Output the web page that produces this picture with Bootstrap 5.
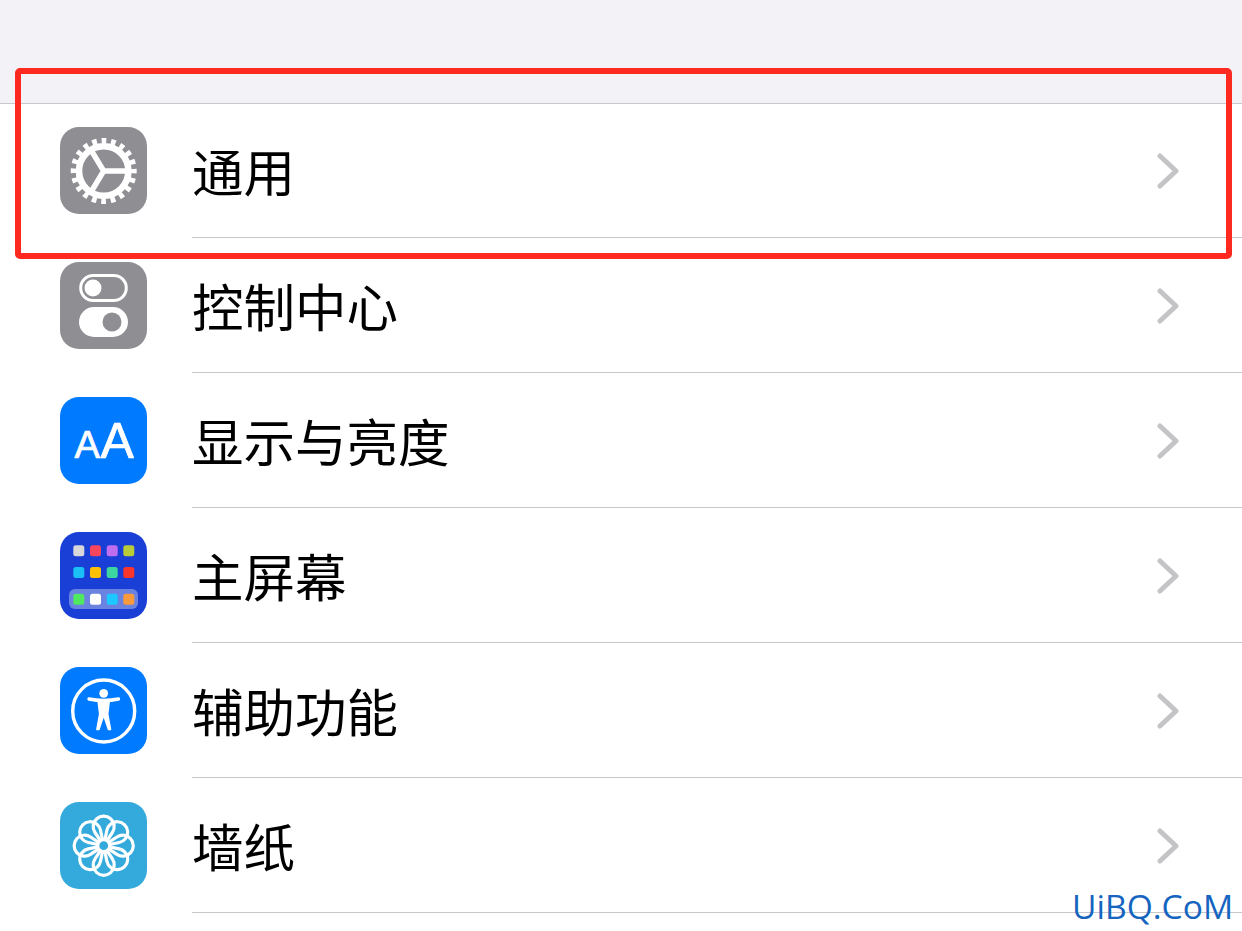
<!DOCTYPE html>
<html lang="zh-CN">
<head>
    <meta charset="UTF-8">
    <meta name="viewport" content="width=device-width, initial-scale=1.0">
    <title>设置</title>
    <link href="https://cdn.jsdelivr.net/npm/bootstrap@5.3.0/dist/css/bootstrap.min.css" rel="stylesheet">
    <style>
        body { background: #fff; overflow: hidden; height: 931px; position: relative; font-family: "Noto Sans CJK SC", "Liberation Sans", sans-serif; }
        .top-gap { height: 104px; background: #f2f2f7; border-bottom: 1px solid #c8c8cc; }
        .settings-list { --bs-list-group-border-width: 0; --bs-list-group-bg: #fff; --bs-list-group-border-radius: 0; }
        .settings-row { height: 135px; }
        .icon-cell { width: 192px; padding: 23px 0 0 60px; flex: none; }
        .app-icon { width: 87px; height: 87px; display: block; }
        .row-body { height: 134px; border-bottom: 1px solid #c8c8cc; }
        .row-label { font-size: 51.5px; line-height: 1; color: #000; padding-bottom: 1px; }
        .row-arrow { width: 22px; height: 36px; margin-right: 63px; }
        .red-frame { position: absolute; left: 15px; top: 68px; width: 1217px; height: 191px; border: 6px solid #ff2a1f; border-radius: 5px; }
        .site-mark { position: absolute; left: 1072px; top: 884px; font-family: "Open Sans", "Liberation Sans", sans-serif; font-size: 33.6px; line-height: 44px; color: #1565c0; }
    </style>
</head>
<body>
    <div class="top-gap"></div>

    <div class="list-group list-group-flush settings-list">
        <div class="list-group-item p-0 d-flex settings-row">
            <div class="icon-cell">
                <svg class="app-icon" viewBox="0 0 87 87">
                    <rect width="87" height="87" rx="19" fill="#8e8e93"/>
                    <circle cx="43.7" cy="44" r="29.5" fill="none" stroke="#fff" stroke-width="7" stroke-dasharray="4.6 4.67" stroke-dashoffset="2.3"/>
                    <circle cx="43.7" cy="44" r="24.7" fill="none" stroke="#fff" stroke-width="6.6"/>
                    <path d="M43.7 44H68M43.7 44L31 23M43.7 44L31 65" fill="none" stroke="#fff" stroke-width="5.4"/>
                </svg>
            </div>
            <div class="row-body flex-grow-1 d-flex align-items-center justify-content-between">
                <span class="row-label">通用</span>
                <svg class="row-arrow" viewBox="0 0 22 36"><path d="M3 3L19 18L3 33" fill="none" stroke="#c4c4c7" stroke-width="5" stroke-linecap="round" stroke-linejoin="round"/></svg>
            </div>
        </div>
        <div class="list-group-item p-0 d-flex settings-row">
            <div class="icon-cell">
                <svg class="app-icon" viewBox="0 0 87 87">
                    <rect width="87" height="87" rx="19" fill="#8e8e93"/>
                    <rect x="20.7" y="13.5" width="45.6" height="25" rx="12.5" fill="none" stroke="#fff" stroke-width="3"/>
                    <circle cx="33" cy="26" r="8.5" fill="#fff"/>
                    <rect x="19" y="45" width="49" height="30" rx="15" fill="#fff"/>
                    <circle cx="52" cy="60" r="9.5" fill="#8e8e93"/>
                </svg>
            </div>
            <div class="row-body flex-grow-1 d-flex align-items-center justify-content-between">
                <span class="row-label">控制中心</span>
                <svg class="row-arrow" viewBox="0 0 22 36"><path d="M3 3L19 18L3 33" fill="none" stroke="#c4c4c7" stroke-width="5" stroke-linecap="round" stroke-linejoin="round"/></svg>
            </div>
        </div>
        <div class="list-group-item p-0 d-flex settings-row">
            <div class="icon-cell">
                <svg class="app-icon" viewBox="0 0 87 87">
                    <rect width="87" height="87" rx="19" fill="#007aff"/>
                    <text x="14.5" y="60.5" font-family="Liberation Sans, sans-serif" font-size="38" fill="#fff" stroke="#fff" stroke-width="0.7" stroke-linejoin="round">A</text>
                    <text x="40.5" y="60.5" font-family="Liberation Sans, sans-serif" font-size="50" fill="#fff" stroke="#fff" stroke-width="0.7" stroke-linejoin="round">A</text>
                </svg>
            </div>
            <div class="row-body flex-grow-1 d-flex align-items-center justify-content-between">
                <span class="row-label">显示与亮度</span>
                <svg class="row-arrow" viewBox="0 0 22 36"><path d="M3 3L19 18L3 33" fill="none" stroke="#c4c4c7" stroke-width="5" stroke-linecap="round" stroke-linejoin="round"/></svg>
            </div>
        </div>
        <div class="list-group-item p-0 d-flex settings-row">
            <div class="icon-cell">
                <svg class="app-icon" viewBox="0 0 87 87">
                    <rect width="87" height="87" rx="19" fill="#1a3fd6"/>
                    <rect x="13.3" y="13.3" width="11" height="11" rx="2.5" fill="#d8d8d8"/>
                    <rect x="30" y="13.3" width="11" height="11" rx="2.5" fill="#f8465f"/>
                    <rect x="46.7" y="13.3" width="11" height="11" rx="2.5" fill="#c06ef0"/>
                    <rect x="63.3" y="13.3" width="11" height="11" rx="2.5" fill="#b8cc3a"/>
                    <rect x="13.3" y="35" width="11" height="11" rx="2.5" fill="#1bc0f5"/>
                    <rect x="30" y="35" width="11" height="11" rx="2.5" fill="#fcc107"/>
                    <rect x="46.7" y="35" width="11" height="11" rx="2.5" fill="#3cd6a0"/>
                    <rect x="63.3" y="35" width="11" height="11" rx="2.5" fill="#f9352c"/>
                    <rect x="9" y="57" width="69" height="20" rx="6" fill="#6a83e0"/>
                    <rect x="13.3" y="61.7" width="11" height="11" rx="2.5" fill="#4fe860"/>
                    <rect x="30" y="61.7" width="11" height="11" rx="2.5" fill="#fff"/>
                    <rect x="46.7" y="61.7" width="11" height="11" rx="2.5" fill="#1bc8ff"/>
                    <rect x="63.3" y="61.7" width="11" height="11" rx="2.5" fill="#fb9a3c"/>
                </svg>
            </div>
            <div class="row-body flex-grow-1 d-flex align-items-center justify-content-between">
                <span class="row-label">主屏幕</span>
                <svg class="row-arrow" viewBox="0 0 22 36"><path d="M3 3L19 18L3 33" fill="none" stroke="#c4c4c7" stroke-width="5" stroke-linecap="round" stroke-linejoin="round"/></svg>
            </div>
        </div>
        <div class="list-group-item p-0 d-flex settings-row">
            <div class="icon-cell">
                <svg class="app-icon" viewBox="0 0 87 87">
                    <rect width="87" height="87" rx="19" fill="#007aff"/>
                    <circle cx="43.7" cy="44" r="31" fill="none" stroke="#fff" stroke-width="3.4"/>
                    <circle cx="43.7" cy="26.3" r="4.4" fill="#fff"/>
                    <path d="M29 32Q43.7 35 58.5 32" fill="none" stroke="#fff" stroke-width="3.4" stroke-linecap="round"/>
                    <path d="M38 33.5H49.4L47.8 47L50.6 62.5H48.4L43.7 48.5L39 62.5H36.8L39.6 47Z" fill="#fff" stroke="#fff" stroke-width="1.4" stroke-linejoin="round"/>
                </svg>
            </div>
            <div class="row-body flex-grow-1 d-flex align-items-center justify-content-between">
                <span class="row-label">辅助功能</span>
                <svg class="row-arrow" viewBox="0 0 22 36"><path d="M3 3L19 18L3 33" fill="none" stroke="#c4c4c7" stroke-width="5" stroke-linecap="round" stroke-linejoin="round"/></svg>
            </div>
        </div>
        <div class="list-group-item p-0 d-flex settings-row">
            <div class="icon-cell">
                <svg class="app-icon" viewBox="0 0 87 87">
                    <rect width="87" height="87" rx="19" fill="#34aadc"/>
                    <g fill="none" stroke="#fff" stroke-width="3.2" stroke-linejoin="round" transform="translate(43.7 43.7)">
                        <path d="M0 0L-8.7 -13.2A10.5 10.5 0 1 1 8.7 -13.2Z"/>
                        <path d="M0 0L-8.7 -13.2A10.5 10.5 0 1 1 8.7 -13.2Z" transform="rotate(45)"/>
                        <path d="M0 0L-8.7 -13.2A10.5 10.5 0 1 1 8.7 -13.2Z" transform="rotate(90)"/>
                        <path d="M0 0L-8.7 -13.2A10.5 10.5 0 1 1 8.7 -13.2Z" transform="rotate(135)"/>
                        <path d="M0 0L-8.7 -13.2A10.5 10.5 0 1 1 8.7 -13.2Z" transform="rotate(180)"/>
                        <path d="M0 0L-8.7 -13.2A10.5 10.5 0 1 1 8.7 -13.2Z" transform="rotate(225)"/>
                        <path d="M0 0L-8.7 -13.2A10.5 10.5 0 1 1 8.7 -13.2Z" transform="rotate(270)"/>
                        <path d="M0 0L-8.7 -13.2A10.5 10.5 0 1 1 8.7 -13.2Z" transform="rotate(315)"/>
                        <circle r="6" fill="#34aadc" stroke-width="3.2"/>
                    </g>
                </svg>
            </div>
            <div class="row-body flex-grow-1 d-flex align-items-center justify-content-between">
                <span class="row-label">墙纸</span>
                <svg class="row-arrow" viewBox="0 0 22 36"><path d="M3 3L19 18L3 33" fill="none" stroke="#c4c4c7" stroke-width="5" stroke-linecap="round" stroke-linejoin="round"/></svg>
            </div>
        </div>
    </div>

    <div class="red-frame"></div>
    <div class="site-mark">UiBQ.CoM</div>

    <script src="https://cdn.jsdelivr.net/npm/bootstrap@5.3.0/dist/js/bootstrap.bundle.min.js"></script>
</body>
</html>
